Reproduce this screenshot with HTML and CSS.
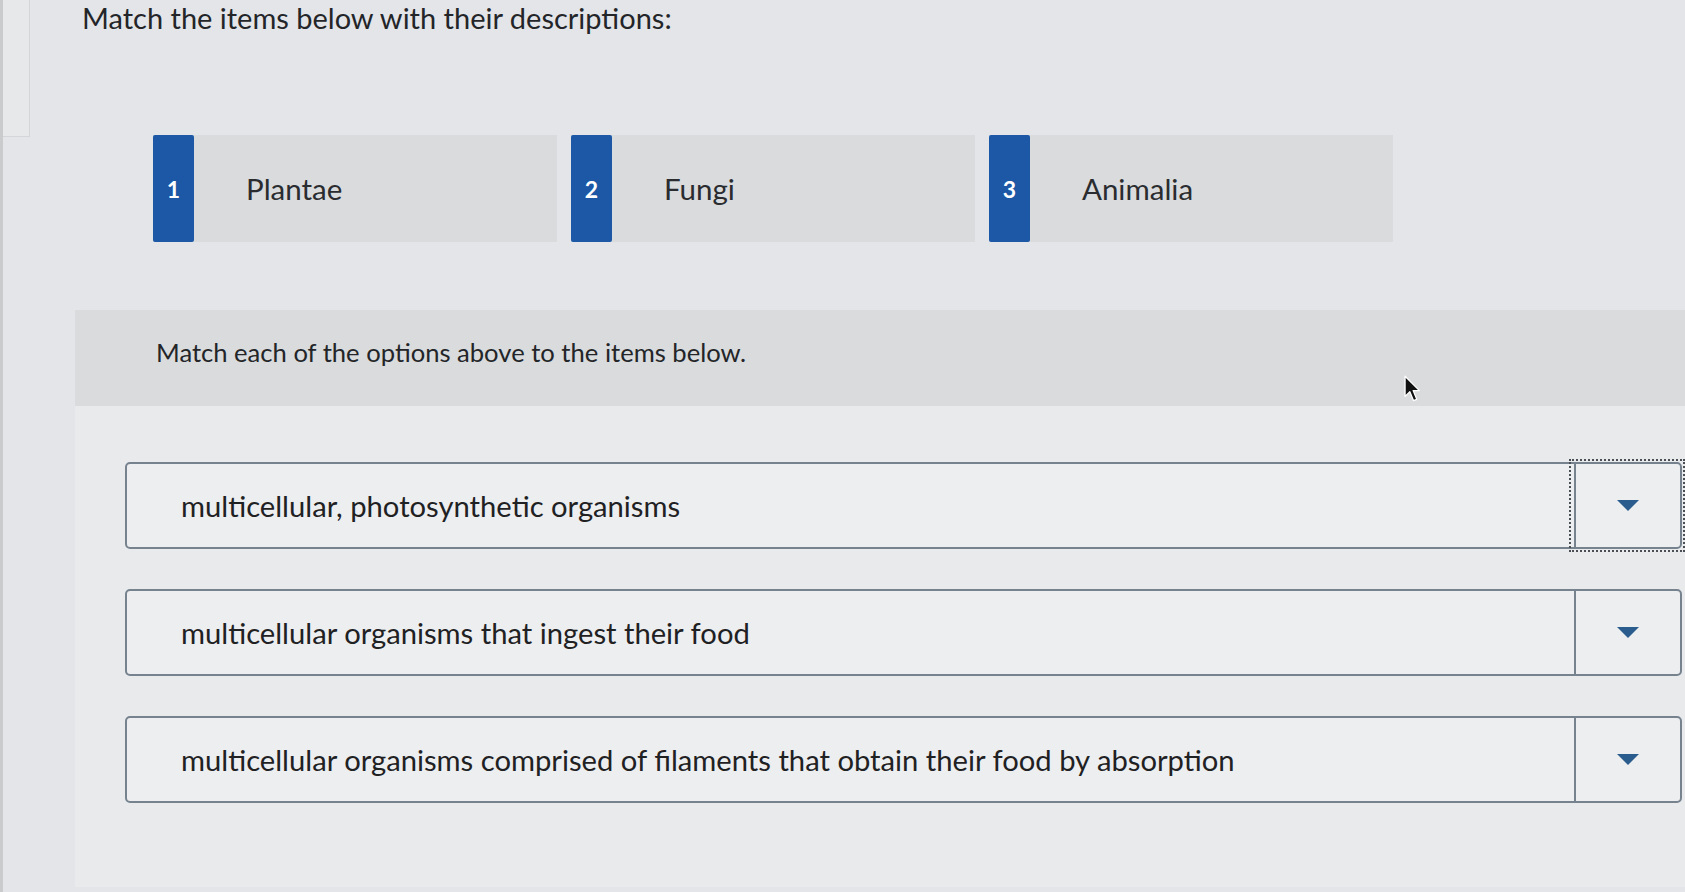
FILE: index.html
```html
<!DOCTYPE html>
<html lang="en">
<head>
<meta charset="utf-8">
<title>Matching</title>
<link rel="stylesheet" href="styles.css">
</head>
<body>
<div class="edge-panel"></div>
<main class="page">
  <h1 class="title">Match the items below with their descriptions:</h1>
  <div class="tiles">
    <div class="tile"><span class="num">1</span><span class="label">Plantae</span></div>
    <div class="tile"><span class="num">2</span><span class="label">Fungi</span></div>
    <div class="tile"><span class="num">3</span><span class="label">Animalia</span></div>
  </div>
  <section class="panel">
    <div class="panel-head">Match each of the options above to the items below.</div>
    <div class="panel-body">
      <div class="row">
        <span class="row-text">multicellular, photosynthetic organisms</span>
        <button class="drop focus" type="button" aria-label="choose"><svg class="caret" viewBox="0 0 22 11" width="22" height="11"><path d="M0 0H22L11 11Z"/></svg></button>
      </div>
      <div class="row">
        <span class="row-text">multicellular organisms that ingest their food</span>
        <button class="drop" type="button" aria-label="choose"><svg class="caret" viewBox="0 0 22 11" width="22" height="11"><path d="M0 0H22L11 11Z"/></svg></button>
      </div>
      <div class="row">
        <span class="row-text">multicellular organisms comprised of filaments that obtain their food by absorption</span>
        <button class="drop" type="button" aria-label="choose"><svg class="caret" viewBox="0 0 22 11" width="22" height="11"><path d="M0 0H22L11 11Z"/></svg></button>
      </div>
    </div>
  </section>
</main>
<svg class="cursor" viewBox="0 0 16 26" width="17" height="28"><path d="M1 1L1 20L5.5 15.5L9 24L12 22.7L8.6 14.5L14.5 14.5Z" fill="#111" stroke="#fff" stroke-width="1.2" stroke-linejoin="round"/></svg>
</body>
</html>
```

FILE: styles.css
```css
html, body {
  margin: 0;
  padding: 0;
}
body {
  background: #e3e5e8;
  font-family: Lato, "Open Sans", sans-serif;
  width: 1685px;
  height: 892px;
  overflow: hidden;
  position: relative;
  border-left: 3px solid #c9cbcd;
  box-sizing: border-box;
}
.edge-panel {
  position: absolute;
  left: 0;
  top: 0;
  width: 26px;
  height: 136px;
  border-right: 1px solid #d3d5d7;
  border-bottom: 1px solid #d3d5d7;
  background: #e6e8ea;
}
.page {
  position: relative;
}
.title {
  margin: 0;
  padding: 2px 0 0 79px;
  font-size: 29px;
  line-height: 32px;
  font-weight: 400;
  color: #232528;
}
.tiles {
  display: flex;
  gap: 14px;
  margin: 101px 0 0 150px;
}
.tile {
  width: 404px;
  height: 107px;
  display: flex;
  align-items: center;
  background: #d9dbdd;
}
.num {
  width: 41px;
  align-self: stretch;
  background: #1c58a5;
  color: #fff;
  font-weight: 700;
  font-size: 23px;
  display: flex;
  align-items: center;
  justify-content: center;
  border-radius: 2px;
}
.label {
  margin-left: 52px;
  font-size: 29.5px;
  color: #2a2c2f;
}
.panel {
  margin: 68px 0 0 72px;
  height: 577px;
  background: #e8eaec;
}
.panel-head {
  height: 96px;
  box-sizing: border-box;
  padding: 0 0 12px 81px;
  display: flex;
  align-items: center;
  background: #d9dbdd;
  font-size: 25.6px;
  color: #232528;
}
.panel-body {
  display: flex;
  flex-direction: column;
  gap: 40px;
  padding: 56px 3px 0 50px;
}
.row {
  height: 87px;
  box-sizing: border-box;
  border: 2px solid #76838f;
  border-radius: 5px;
  background: #eceef0;
  display: flex;
  align-items: center;
}
.row-text {
  flex: 1;
  padding-left: 54px;
  font-size: 29.2px;
  color: #1f2123;
}
.drop {
  width: 106px;
  align-self: stretch;
  border: none;
  border-left: 2px solid #76838f;
  background: transparent;
  display: flex;
  align-items: center;
  justify-content: center;
  padding: 0;
}
.drop.focus {
  outline: 2px dotted #4a4f55;
  outline-offset: 3px;
}
.caret {
  fill: #2a5c8e;
}
.cursor {
  position: absolute;
  left: 1401px;
  top: 375px;
}
```
